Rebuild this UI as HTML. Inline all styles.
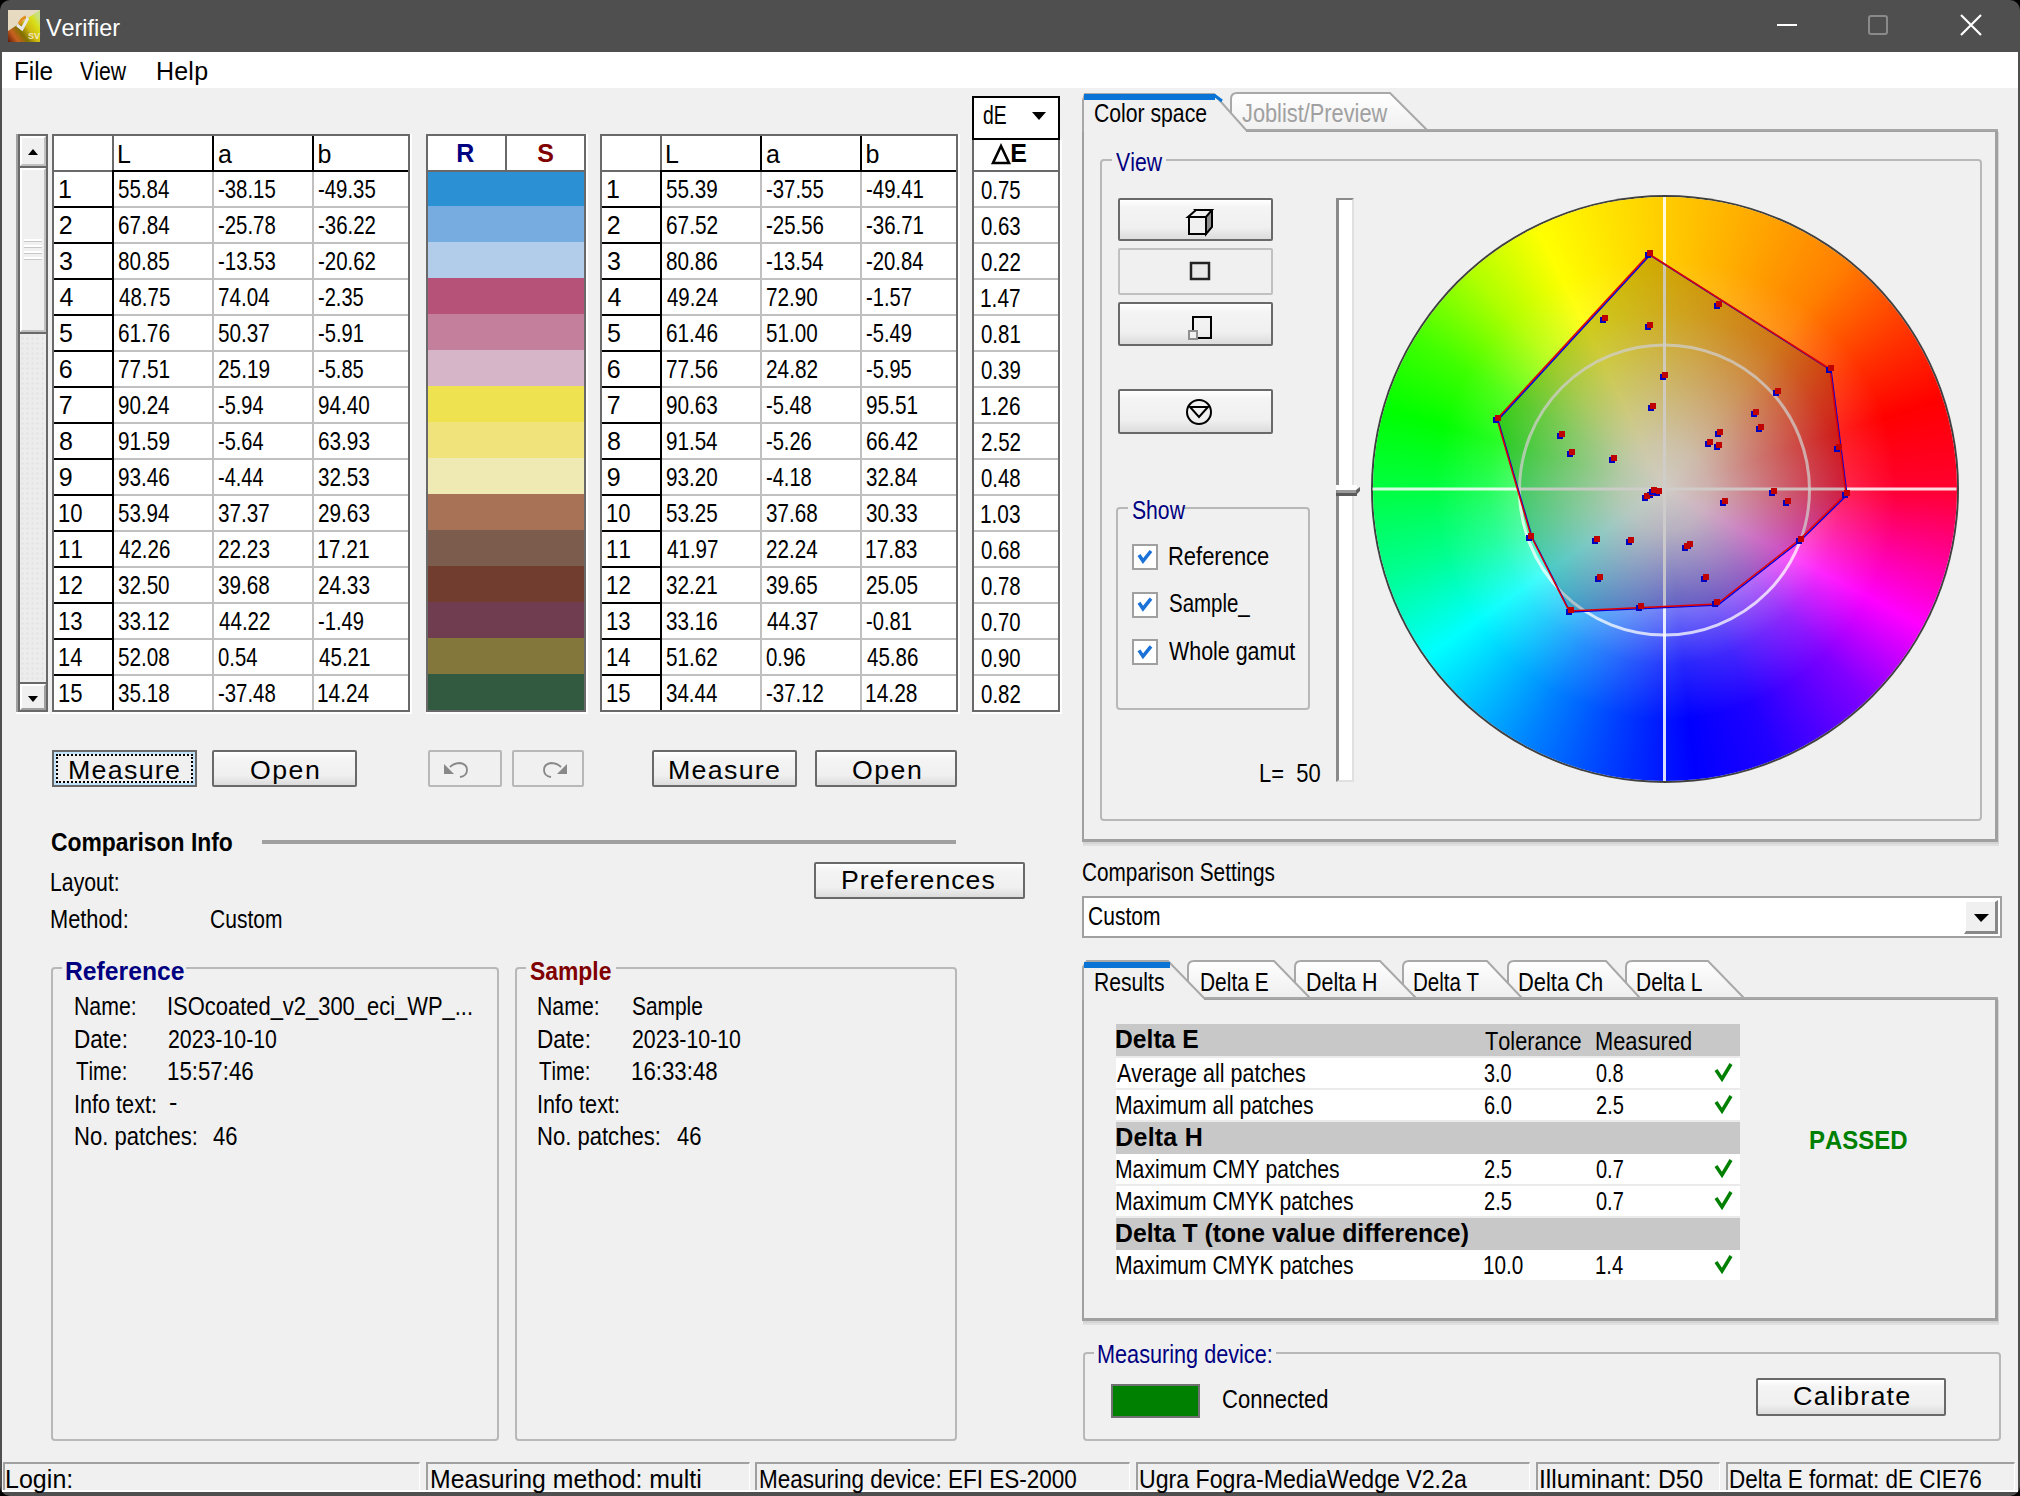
<!DOCTYPE html><html><head><meta charset="utf-8"><style>
html,body{margin:0;padding:0;}
body{width:2020px;height:1496px;position:relative;overflow:hidden;background:#f0f0f0;font-family:"Liberation Sans", sans-serif;font-kerning:none;}
.t{position:absolute;z-index:10;white-space:pre;line-height:1;font-family:"Liberation Sans", sans-serif;}
.r{position:absolute;box-sizing:border-box;}
svg{position:absolute;left:0;top:0;}
</style></head><body>
<div class="r" style="left:0px;top:0px;width:2020px;height:52px;background:#4f4f4f;"></div>
<div class="r" style="left:0px;top:52px;width:2px;height:1444px;background:#4f4f4f;"></div>
<div class="r" style="left:2018px;top:52px;width:2px;height:1444px;background:#4f4f4f;"></div>
<div class="r" style="left:0px;top:1492px;width:2020px;height:4px;background:#4f4f4f;"></div>
<div class="r" style="left:2px;top:52px;width:2016px;height:36px;background:#ffffff;"></div>
<svg width="2020" height="1496" style="z-index:50;pointer-events:none"><path d="M0 0 H10 A10 10 0 0 0 0 10 Z" fill="#000"/><path d="M2020 0 H2010 A10 10 0 0 1 2020 10 Z" fill="#000"/><path d="M0 1496 V1486 A10 10 0 0 0 10 1496 Z" fill="#000"/><path d="M2020 1496 V1486 A10 10 0 0 1 2010 1496 Z" fill="#000"/></svg>
<svg width="60" height="60" style="z-index:2"><defs><linearGradient id="ig" x1="0" y1="1" x2="1" y2="0.3"><stop offset="0" stop-color="#5a1808"/><stop offset="0.22" stop-color="#c86020"/><stop offset="0.42" stop-color="#807000"/><stop offset="0.62" stop-color="#d0b810"/><stop offset="0.85" stop-color="#d8e018"/><stop offset="1" stop-color="#c8e080"/></linearGradient></defs><rect x="8" y="10" width="32" height="32" fill="#e6dac0"/><path d="M8 31 L40 10 L40 42 L8 42 Z" fill="url(#ig)"/><path d="M19 24 Q22 18 26 17" stroke="#e09020" stroke-width="3" fill="none"/><path d="M17 25 L22 29 L28 18" stroke="#e8e8e8" stroke-width="3" fill="none"/><text x="28" y="39" font-family="Liberation Sans" font-weight="bold" font-size="9" fill="#f0e8c0">SV</text></svg>
<div class="t" style="left:46.40px;top:15.69px;font-size:24px;color:#ffffff;transform:scaleX(0.9733);transform-origin:0 0;">Verifier</div>
<div class="r" style="left:1777px;top:24px;width:20px;height:2px;background:#ffffff;"></div>
<div class="r" style="left:1868px;top:15px;width:20px;height:20px;border:2px solid #8a8a8a;border-radius:3px;"></div>
<svg width="2020" height="60" style="z-index:2"><path d="M1961 15 L1981 35 M1981 15 L1961 35" stroke="#fff" stroke-width="2.2"/></svg>
<div class="t" style="left:14.01px;top:59.03px;font-size:25px;color:#000;transform:scaleX(0.9698);transform-origin:0 0;">File</div>
<div class="t" style="left:79.91px;top:59.03px;font-size:25px;color:#000;transform:scaleX(0.8497);transform-origin:0 0;">View</div>
<div class="t" style="left:155.95px;top:59.03px;font-size:25px;color:#000;letter-spacing:0.228px;">Help</div>
<div class="r" style="left:16px;top:134px;width:32px;height:578px;background:#a0a0a0;"></div>
<div class="r" style="left:18px;top:134px;width:30px;height:578px;background:#696969;"></div>
<div class="r" style="left:20px;top:136px;width:26px;height:574px;background:#ececec;background-image:radial-gradient(#e4e4e4 35%,transparent 36%);background-size:5px 5px;"></div>
<div class="r" style="left:20px;top:136px;width:26px;height:30px;background:#f0f0f0;border-top:2px solid #fff;border-left:2px solid #fff;border-right:2px solid #c0c0c0;border-bottom:2px solid #c0c0c0;"></div>
<div class="r" style="left:20px;top:166px;width:26px;height:2px;background:#696969;"></div>
<svg width="100" height="720"><path d="M28 155 L33 149 L38 155 Z" fill="#000"/><path d="M28 695 L33 701 L38 695 Z" fill="#000"/></svg>
<div class="r" style="left:20px;top:168px;width:26px;height:164px;background:#f0f0f0;border-top:2px solid #fff;border-left:2px solid #fff;border-right:2px solid #c0c0c0;border-bottom:2px solid #c0c0c0;"></div>
<div class="r" style="left:20px;top:332px;width:26px;height:2px;background:#696969;"></div>
<div class="r" style="left:24px;top:239px;width:18px;height:2px;background:#ffffff;"></div>
<div class="r" style="left:24px;top:241px;width:18px;height:1px;background:#c8c8c8;"></div>
<div class="r" style="left:24px;top:245px;width:18px;height:2px;background:#ffffff;"></div>
<div class="r" style="left:24px;top:247px;width:18px;height:1px;background:#c8c8c8;"></div>
<div class="r" style="left:24px;top:251px;width:18px;height:2px;background:#ffffff;"></div>
<div class="r" style="left:24px;top:253px;width:18px;height:1px;background:#c8c8c8;"></div>
<div class="r" style="left:24px;top:257px;width:18px;height:2px;background:#ffffff;"></div>
<div class="r" style="left:24px;top:259px;width:18px;height:1px;background:#c8c8c8;"></div>
<div class="r" style="left:20px;top:682px;width:26px;height:2px;background:#696969;"></div>
<div class="r" style="left:20px;top:684px;width:26px;height:26px;background:#f0f0f0;border-top:2px solid #fff;border-left:2px solid #fff;border-right:2px solid #a0a0a0;border-bottom:2px solid #a0a0a0;"></div>
<svg width="100" height="720"><path d="M28 696 L38 696 L33 702 Z" fill="#000"/></svg>
<div class="r" style="left:16px;top:712px;width:34px;height:2px;background:#ffffff;"></div>
<div class="r" style="left:52px;top:134px;width:358px;height:578px;background:#696969;"></div>
<div class="r" style="left:54px;top:136px;width:354px;height:574px;background:#ffffff;"></div>
<div class="r" style="left:112px;top:136px;width:2px;height:34px;background:#696969;"></div>
<div class="r" style="left:112px;top:170px;width:2px;height:540px;background:#000;"></div>
<div class="r" style="left:54px;top:170px;width:58px;height:2px;background:#696969;"></div>
<div class="r" style="left:114px;top:170px;width:294px;height:2px;background:#000;"></div>
<div class="r" style="left:212px;top:136px;width:2px;height:34px;background:#000;"></div>
<div class="r" style="left:212px;top:172px;width:2px;height:538px;background:#c0c0c0;"></div>
<div class="r" style="left:312px;top:136px;width:2px;height:34px;background:#000;"></div>
<div class="r" style="left:312px;top:172px;width:2px;height:538px;background:#c0c0c0;"></div>
<div class="r" style="left:54px;top:206px;width:58px;height:2px;background:#000;"></div>
<div class="r" style="left:114px;top:206px;width:294px;height:2px;background:#c0c0c0;"></div>
<div class="r" style="left:54px;top:242px;width:58px;height:2px;background:#000;"></div>
<div class="r" style="left:114px;top:242px;width:294px;height:2px;background:#c0c0c0;"></div>
<div class="r" style="left:54px;top:278px;width:58px;height:2px;background:#000;"></div>
<div class="r" style="left:114px;top:278px;width:294px;height:2px;background:#c0c0c0;"></div>
<div class="r" style="left:54px;top:314px;width:58px;height:2px;background:#000;"></div>
<div class="r" style="left:114px;top:314px;width:294px;height:2px;background:#c0c0c0;"></div>
<div class="r" style="left:54px;top:350px;width:58px;height:2px;background:#000;"></div>
<div class="r" style="left:114px;top:350px;width:294px;height:2px;background:#c0c0c0;"></div>
<div class="r" style="left:54px;top:386px;width:58px;height:2px;background:#000;"></div>
<div class="r" style="left:114px;top:386px;width:294px;height:2px;background:#c0c0c0;"></div>
<div class="r" style="left:54px;top:422px;width:58px;height:2px;background:#000;"></div>
<div class="r" style="left:114px;top:422px;width:294px;height:2px;background:#c0c0c0;"></div>
<div class="r" style="left:54px;top:458px;width:58px;height:2px;background:#000;"></div>
<div class="r" style="left:114px;top:458px;width:294px;height:2px;background:#c0c0c0;"></div>
<div class="r" style="left:54px;top:494px;width:58px;height:2px;background:#000;"></div>
<div class="r" style="left:114px;top:494px;width:294px;height:2px;background:#c0c0c0;"></div>
<div class="r" style="left:54px;top:530px;width:58px;height:2px;background:#000;"></div>
<div class="r" style="left:114px;top:530px;width:294px;height:2px;background:#c0c0c0;"></div>
<div class="r" style="left:54px;top:566px;width:58px;height:2px;background:#000;"></div>
<div class="r" style="left:114px;top:566px;width:294px;height:2px;background:#c0c0c0;"></div>
<div class="r" style="left:54px;top:602px;width:58px;height:2px;background:#000;"></div>
<div class="r" style="left:114px;top:602px;width:294px;height:2px;background:#c0c0c0;"></div>
<div class="r" style="left:54px;top:638px;width:58px;height:2px;background:#000;"></div>
<div class="r" style="left:114px;top:638px;width:294px;height:2px;background:#c0c0c0;"></div>
<div class="r" style="left:54px;top:674px;width:58px;height:2px;background:#000;"></div>
<div class="r" style="left:114px;top:674px;width:294px;height:2px;background:#c0c0c0;"></div>
<div class="r" style="left:52px;top:712px;width:360px;height:2px;background:#ffffff;"></div>
<div class="r" style="left:410px;top:134px;width:2px;height:580px;background:#ffffff;"></div>
<div class="t" style="left:116.95px;top:142.03px;font-size:25px;color:#000;">L</div>
<div class="t" style="left:217.94px;top:142.03px;font-size:25px;color:#000;">a</div>
<div class="t" style="left:317.39px;top:142.03px;font-size:25px;color:#000;">b</div>
<div class="t" style="left:58.10px;top:177.03px;font-size:25px;color:#000;">1</div>
<div class="t" style="left:118.18px;top:177.03px;font-size:25px;color:#000;transform:scaleX(0.8220);transform-origin:0 0;">55.84</div>
<div class="t" style="left:218.09px;top:177.03px;font-size:25px;color:#000;transform:scaleX(0.8148);transform-origin:0 0;">-38.15</div>
<div class="t" style="left:318.09px;top:177.03px;font-size:25px;color:#000;transform:scaleX(0.8148);transform-origin:0 0;">-49.35</div>
<div class="t" style="left:58.74px;top:213.03px;font-size:25px;color:#000;">2</div>
<div class="t" style="left:117.95px;top:213.03px;font-size:25px;color:#000;transform:scaleX(0.8256);transform-origin:0 0;">67.84</div>
<div class="t" style="left:218.09px;top:213.03px;font-size:25px;color:#000;transform:scaleX(0.8153);transform-origin:0 0;">-25.78</div>
<div class="t" style="left:318.09px;top:213.03px;font-size:25px;color:#000;transform:scaleX(0.8173);transform-origin:0 0;">-36.22</div>
<div class="t" style="left:59.05px;top:249.03px;font-size:25px;color:#000;">3</div>
<div class="t" style="left:118.10px;top:249.03px;font-size:25px;color:#000;transform:scaleX(0.8275);transform-origin:0 0;">80.85</div>
<div class="t" style="left:218.09px;top:249.03px;font-size:25px;color:#000;transform:scaleX(0.8154);transform-origin:0 0;">-13.53</div>
<div class="t" style="left:318.09px;top:249.03px;font-size:25px;color:#000;transform:scaleX(0.8173);transform-origin:0 0;">-20.62</div>
<div class="t" style="left:59.43px;top:285.03px;font-size:25px;color:#000;">4</div>
<div class="t" style="left:118.53px;top:285.03px;font-size:25px;color:#000;transform:scaleX(0.8205);transform-origin:0 0;">48.75</div>
<div class="t" style="left:217.94px;top:285.03px;font-size:25px;color:#000;transform:scaleX(0.8258);transform-origin:0 0;">74.04</div>
<div class="t" style="left:318.11px;top:285.03px;font-size:25px;color:#000;transform:scaleX(0.8026);transform-origin:0 0;">-2.35</div>
<div class="t" style="left:59.00px;top:321.03px;font-size:25px;color:#000;">5</div>
<div class="t" style="left:117.95px;top:321.03px;font-size:25px;color:#000;transform:scaleX(0.8307);transform-origin:0 0;">61.76</div>
<div class="t" style="left:218.17px;top:321.03px;font-size:25px;color:#000;transform:scaleX(0.8291);transform-origin:0 0;">50.37</div>
<div class="t" style="left:318.11px;top:321.03px;font-size:25px;color:#000;transform:scaleX(0.8051);transform-origin:0 0;">-5.91</div>
<div class="t" style="left:58.73px;top:357.03px;font-size:25px;color:#000;">6</div>
<div class="t" style="left:117.93px;top:357.03px;font-size:25px;color:#000;transform:scaleX(0.8325);transform-origin:0 0;">77.51</div>
<div class="t" style="left:217.95px;top:357.03px;font-size:25px;color:#000;transform:scaleX(0.8317);transform-origin:0 0;">25.19</div>
<div class="t" style="left:318.11px;top:357.03px;font-size:25px;color:#000;transform:scaleX(0.8026);transform-origin:0 0;">-5.85</div>
<div class="t" style="left:58.72px;top:393.03px;font-size:25px;color:#000;">7</div>
<div class="t" style="left:118.03px;top:393.03px;font-size:25px;color:#000;transform:scaleX(0.8243);transform-origin:0 0;">90.24</div>
<div class="t" style="left:218.11px;top:393.03px;font-size:25px;color:#000;transform:scaleX(0.7980);transform-origin:0 0;">-5.94</div>
<div class="t" style="left:318.03px;top:393.03px;font-size:25px;color:#000;transform:scaleX(0.8276);transform-origin:0 0;">94.40</div>
<div class="t" style="left:58.91px;top:429.03px;font-size:25px;color:#000;">8</div>
<div class="t" style="left:118.03px;top:429.03px;font-size:25px;color:#000;transform:scaleX(0.8305);transform-origin:0 0;">91.59</div>
<div class="t" style="left:218.11px;top:429.03px;font-size:25px;color:#000;transform:scaleX(0.7980);transform-origin:0 0;">-5.64</div>
<div class="t" style="left:317.95px;top:429.03px;font-size:25px;color:#000;transform:scaleX(0.8307);transform-origin:0 0;">63.93</div>
<div class="t" style="left:58.83px;top:465.03px;font-size:25px;color:#000;">9</div>
<div class="t" style="left:118.03px;top:465.03px;font-size:25px;color:#000;transform:scaleX(0.8293);transform-origin:0 0;">93.46</div>
<div class="t" style="left:218.11px;top:465.03px;font-size:25px;color:#000;transform:scaleX(0.7980);transform-origin:0 0;">-4.44</div>
<div class="t" style="left:318.21px;top:465.03px;font-size:25px;color:#000;transform:scaleX(0.8263);transform-origin:0 0;">32.53</div>
<div class="t" style="left:58.32px;top:501.03px;font-size:25px;color:#000;transform:scaleX(0.8826);transform-origin:0 0;">10</div>
<div class="t" style="left:118.18px;top:501.03px;font-size:25px;color:#000;transform:scaleX(0.8220);transform-origin:0 0;">53.94</div>
<div class="t" style="left:218.21px;top:501.03px;font-size:25px;color:#000;transform:scaleX(0.8285);transform-origin:0 0;">37.37</div>
<div class="t" style="left:317.96px;top:501.03px;font-size:25px;color:#000;transform:scaleX(0.8305);transform-origin:0 0;">29.63</div>
<div class="t" style="left:58.30px;top:537.03px;font-size:25px;color:#000;transform:scaleX(0.8913);transform-origin:0 0;">11</div>
<div class="t" style="left:118.53px;top:537.03px;font-size:25px;color:#000;transform:scaleX(0.8212);transform-origin:0 0;">42.26</div>
<div class="t" style="left:217.96px;top:537.03px;font-size:25px;color:#000;transform:scaleX(0.8305);transform-origin:0 0;">22.23</div>
<div class="t" style="left:317.40px;top:537.03px;font-size:25px;color:#000;transform:scaleX(0.8412);transform-origin:0 0;">17.21</div>
<div class="t" style="left:58.30px;top:573.03px;font-size:25px;color:#000;transform:scaleX(0.8926);transform-origin:0 0;">12</div>
<div class="t" style="left:118.21px;top:573.03px;font-size:25px;color:#000;transform:scaleX(0.8246);transform-origin:0 0;">32.50</div>
<div class="t" style="left:218.21px;top:573.03px;font-size:25px;color:#000;transform:scaleX(0.8261);transform-origin:0 0;">39.68</div>
<div class="t" style="left:317.96px;top:573.03px;font-size:25px;color:#000;transform:scaleX(0.8305);transform-origin:0 0;">24.33</div>
<div class="t" style="left:58.31px;top:609.03px;font-size:25px;color:#000;transform:scaleX(0.8869);transform-origin:0 0;">13</div>
<div class="t" style="left:118.21px;top:609.03px;font-size:25px;color:#000;transform:scaleX(0.8285);transform-origin:0 0;">33.12</div>
<div class="t" style="left:218.53px;top:609.03px;font-size:25px;color:#000;transform:scaleX(0.8233);transform-origin:0 0;">44.22</div>
<div class="t" style="left:318.11px;top:609.03px;font-size:25px;color:#000;transform:scaleX(0.8046);transform-origin:0 0;">-1.49</div>
<div class="t" style="left:58.34px;top:645.03px;font-size:25px;color:#000;transform:scaleX(0.8740);transform-origin:0 0;">14</div>
<div class="t" style="left:118.17px;top:645.03px;font-size:25px;color:#000;transform:scaleX(0.8268);transform-origin:0 0;">52.08</div>
<div class="t" style="left:218.21px;top:645.03px;font-size:25px;color:#000;transform:scaleX(0.8094);transform-origin:0 0;">0.54</div>
<div class="t" style="left:318.53px;top:645.03px;font-size:25px;color:#000;transform:scaleX(0.8228);transform-origin:0 0;">45.21</div>
<div class="t" style="left:58.31px;top:681.03px;font-size:25px;color:#000;transform:scaleX(0.8852);transform-origin:0 0;">15</div>
<div class="t" style="left:118.21px;top:681.03px;font-size:25px;color:#000;transform:scaleX(0.8261);transform-origin:0 0;">35.18</div>
<div class="t" style="left:218.09px;top:681.03px;font-size:25px;color:#000;transform:scaleX(0.8153);transform-origin:0 0;">-37.48</div>
<div class="t" style="left:317.41px;top:681.03px;font-size:25px;color:#000;transform:scaleX(0.8344);transform-origin:0 0;">14.24</div>
<div class="r" style="left:600px;top:134px;width:358px;height:578px;background:#696969;"></div>
<div class="r" style="left:602px;top:136px;width:354px;height:574px;background:#ffffff;"></div>
<div class="r" style="left:660px;top:136px;width:2px;height:34px;background:#696969;"></div>
<div class="r" style="left:660px;top:170px;width:2px;height:540px;background:#000;"></div>
<div class="r" style="left:602px;top:170px;width:58px;height:2px;background:#696969;"></div>
<div class="r" style="left:662px;top:170px;width:294px;height:2px;background:#000;"></div>
<div class="r" style="left:760px;top:136px;width:2px;height:34px;background:#000;"></div>
<div class="r" style="left:760px;top:172px;width:2px;height:538px;background:#c0c0c0;"></div>
<div class="r" style="left:860px;top:136px;width:2px;height:34px;background:#000;"></div>
<div class="r" style="left:860px;top:172px;width:2px;height:538px;background:#c0c0c0;"></div>
<div class="r" style="left:602px;top:206px;width:58px;height:2px;background:#000;"></div>
<div class="r" style="left:662px;top:206px;width:294px;height:2px;background:#c0c0c0;"></div>
<div class="r" style="left:602px;top:242px;width:58px;height:2px;background:#000;"></div>
<div class="r" style="left:662px;top:242px;width:294px;height:2px;background:#c0c0c0;"></div>
<div class="r" style="left:602px;top:278px;width:58px;height:2px;background:#000;"></div>
<div class="r" style="left:662px;top:278px;width:294px;height:2px;background:#c0c0c0;"></div>
<div class="r" style="left:602px;top:314px;width:58px;height:2px;background:#000;"></div>
<div class="r" style="left:662px;top:314px;width:294px;height:2px;background:#c0c0c0;"></div>
<div class="r" style="left:602px;top:350px;width:58px;height:2px;background:#000;"></div>
<div class="r" style="left:662px;top:350px;width:294px;height:2px;background:#c0c0c0;"></div>
<div class="r" style="left:602px;top:386px;width:58px;height:2px;background:#000;"></div>
<div class="r" style="left:662px;top:386px;width:294px;height:2px;background:#c0c0c0;"></div>
<div class="r" style="left:602px;top:422px;width:58px;height:2px;background:#000;"></div>
<div class="r" style="left:662px;top:422px;width:294px;height:2px;background:#c0c0c0;"></div>
<div class="r" style="left:602px;top:458px;width:58px;height:2px;background:#000;"></div>
<div class="r" style="left:662px;top:458px;width:294px;height:2px;background:#c0c0c0;"></div>
<div class="r" style="left:602px;top:494px;width:58px;height:2px;background:#000;"></div>
<div class="r" style="left:662px;top:494px;width:294px;height:2px;background:#c0c0c0;"></div>
<div class="r" style="left:602px;top:530px;width:58px;height:2px;background:#000;"></div>
<div class="r" style="left:662px;top:530px;width:294px;height:2px;background:#c0c0c0;"></div>
<div class="r" style="left:602px;top:566px;width:58px;height:2px;background:#000;"></div>
<div class="r" style="left:662px;top:566px;width:294px;height:2px;background:#c0c0c0;"></div>
<div class="r" style="left:602px;top:602px;width:58px;height:2px;background:#000;"></div>
<div class="r" style="left:662px;top:602px;width:294px;height:2px;background:#c0c0c0;"></div>
<div class="r" style="left:602px;top:638px;width:58px;height:2px;background:#000;"></div>
<div class="r" style="left:662px;top:638px;width:294px;height:2px;background:#c0c0c0;"></div>
<div class="r" style="left:602px;top:674px;width:58px;height:2px;background:#000;"></div>
<div class="r" style="left:662px;top:674px;width:294px;height:2px;background:#c0c0c0;"></div>
<div class="r" style="left:600px;top:712px;width:360px;height:2px;background:#ffffff;"></div>
<div class="r" style="left:958px;top:134px;width:2px;height:580px;background:#ffffff;"></div>
<div class="t" style="left:664.95px;top:142.03px;font-size:25px;color:#000;">L</div>
<div class="t" style="left:765.94px;top:142.03px;font-size:25px;color:#000;">a</div>
<div class="t" style="left:865.39px;top:142.03px;font-size:25px;color:#000;">b</div>
<div class="t" style="left:606.10px;top:177.03px;font-size:25px;color:#000;">1</div>
<div class="t" style="left:666.17px;top:177.03px;font-size:25px;color:#000;transform:scaleX(0.8281);transform-origin:0 0;">55.39</div>
<div class="t" style="left:766.09px;top:177.03px;font-size:25px;color:#000;transform:scaleX(0.8148);transform-origin:0 0;">-37.55</div>
<div class="t" style="left:866.09px;top:177.03px;font-size:25px;color:#000;transform:scaleX(0.8169);transform-origin:0 0;">-49.41</div>
<div class="t" style="left:606.74px;top:213.03px;font-size:25px;color:#000;">2</div>
<div class="t" style="left:665.94px;top:213.03px;font-size:25px;color:#000;transform:scaleX(0.8329);transform-origin:0 0;">67.52</div>
<div class="t" style="left:766.09px;top:213.03px;font-size:25px;color:#000;transform:scaleX(0.8154);transform-origin:0 0;">-25.56</div>
<div class="t" style="left:866.09px;top:213.03px;font-size:25px;color:#000;transform:scaleX(0.8169);transform-origin:0 0;">-36.71</div>
<div class="t" style="left:607.05px;top:249.03px;font-size:25px;color:#000;">3</div>
<div class="t" style="left:666.10px;top:249.03px;font-size:25px;color:#000;transform:scaleX(0.8281);transform-origin:0 0;">80.86</div>
<div class="t" style="left:766.10px;top:249.03px;font-size:25px;color:#000;transform:scaleX(0.8111);transform-origin:0 0;">-13.54</div>
<div class="t" style="left:866.10px;top:249.03px;font-size:25px;color:#000;transform:scaleX(0.8111);transform-origin:0 0;">-20.84</div>
<div class="t" style="left:607.43px;top:285.03px;font-size:25px;color:#000;">4</div>
<div class="t" style="left:666.53px;top:285.03px;font-size:25px;color:#000;transform:scaleX(0.8163);transform-origin:0 0;">49.24</div>
<div class="t" style="left:765.94px;top:285.03px;font-size:25px;color:#000;transform:scaleX(0.8291);transform-origin:0 0;">72.90</div>
<div class="t" style="left:866.11px;top:285.03px;font-size:25px;color:#000;transform:scaleX(0.8057);transform-origin:0 0;">-1.57</div>
<div class="t" style="left:607.00px;top:321.03px;font-size:25px;color:#000;">5</div>
<div class="t" style="left:665.95px;top:321.03px;font-size:25px;color:#000;transform:scaleX(0.8307);transform-origin:0 0;">61.46</div>
<div class="t" style="left:766.17px;top:321.03px;font-size:25px;color:#000;transform:scaleX(0.8253);transform-origin:0 0;">51.00</div>
<div class="t" style="left:866.11px;top:321.03px;font-size:25px;color:#000;transform:scaleX(0.8046);transform-origin:0 0;">-5.49</div>
<div class="t" style="left:606.73px;top:357.03px;font-size:25px;color:#000;">6</div>
<div class="t" style="left:665.94px;top:357.03px;font-size:25px;color:#000;transform:scaleX(0.8308);transform-origin:0 0;">77.56</div>
<div class="t" style="left:765.95px;top:357.03px;font-size:25px;color:#000;transform:scaleX(0.8327);transform-origin:0 0;">24.82</div>
<div class="t" style="left:866.11px;top:357.03px;font-size:25px;color:#000;transform:scaleX(0.8026);transform-origin:0 0;">-5.95</div>
<div class="t" style="left:606.72px;top:393.03px;font-size:25px;color:#000;">7</div>
<div class="t" style="left:666.03px;top:393.03px;font-size:25px;color:#000;transform:scaleX(0.8293);transform-origin:0 0;">90.63</div>
<div class="t" style="left:766.11px;top:393.03px;font-size:25px;color:#000;transform:scaleX(0.8031);transform-origin:0 0;">-5.48</div>
<div class="t" style="left:866.03px;top:393.03px;font-size:25px;color:#000;transform:scaleX(0.8310);transform-origin:0 0;">95.51</div>
<div class="t" style="left:606.91px;top:429.03px;font-size:25px;color:#000;">8</div>
<div class="t" style="left:666.03px;top:429.03px;font-size:25px;color:#000;transform:scaleX(0.8243);transform-origin:0 0;">91.54</div>
<div class="t" style="left:766.11px;top:429.03px;font-size:25px;color:#000;transform:scaleX(0.8033);transform-origin:0 0;">-5.26</div>
<div class="t" style="left:865.94px;top:429.03px;font-size:25px;color:#000;transform:scaleX(0.8329);transform-origin:0 0;">66.42</div>
<div class="t" style="left:606.83px;top:465.03px;font-size:25px;color:#000;">9</div>
<div class="t" style="left:666.03px;top:465.03px;font-size:25px;color:#000;transform:scaleX(0.8276);transform-origin:0 0;">93.20</div>
<div class="t" style="left:766.11px;top:465.03px;font-size:25px;color:#000;transform:scaleX(0.8031);transform-origin:0 0;">-4.18</div>
<div class="t" style="left:866.22px;top:465.03px;font-size:25px;color:#000;transform:scaleX(0.8213);transform-origin:0 0;">32.84</div>
<div class="t" style="left:606.32px;top:501.03px;font-size:25px;color:#000;transform:scaleX(0.8826);transform-origin:0 0;">10</div>
<div class="t" style="left:666.17px;top:501.03px;font-size:25px;color:#000;transform:scaleX(0.8263);transform-origin:0 0;">53.25</div>
<div class="t" style="left:766.21px;top:501.03px;font-size:25px;color:#000;transform:scaleX(0.8261);transform-origin:0 0;">37.68</div>
<div class="t" style="left:866.21px;top:501.03px;font-size:25px;color:#000;transform:scaleX(0.8263);transform-origin:0 0;">30.33</div>
<div class="t" style="left:606.30px;top:537.03px;font-size:25px;color:#000;transform:scaleX(0.8913);transform-origin:0 0;">11</div>
<div class="t" style="left:666.53px;top:537.03px;font-size:25px;color:#000;transform:scaleX(0.8233);transform-origin:0 0;">41.97</div>
<div class="t" style="left:765.96px;top:537.03px;font-size:25px;color:#000;transform:scaleX(0.8255);transform-origin:0 0;">22.24</div>
<div class="t" style="left:865.40px;top:537.03px;font-size:25px;color:#000;transform:scaleX(0.8395);transform-origin:0 0;">17.83</div>
<div class="t" style="left:606.30px;top:573.03px;font-size:25px;color:#000;transform:scaleX(0.8926);transform-origin:0 0;">12</div>
<div class="t" style="left:666.21px;top:573.03px;font-size:25px;color:#000;transform:scaleX(0.8280);transform-origin:0 0;">32.21</div>
<div class="t" style="left:766.21px;top:573.03px;font-size:25px;color:#000;transform:scaleX(0.8256);transform-origin:0 0;">39.65</div>
<div class="t" style="left:865.96px;top:573.03px;font-size:25px;color:#000;transform:scaleX(0.8298);transform-origin:0 0;">25.05</div>
<div class="t" style="left:606.31px;top:609.03px;font-size:25px;color:#000;transform:scaleX(0.8869);transform-origin:0 0;">13</div>
<div class="t" style="left:666.21px;top:609.03px;font-size:25px;color:#000;transform:scaleX(0.8263);transform-origin:0 0;">33.16</div>
<div class="t" style="left:766.53px;top:609.03px;font-size:25px;color:#000;transform:scaleX(0.8233);transform-origin:0 0;">44.37</div>
<div class="t" style="left:866.11px;top:609.03px;font-size:25px;color:#000;transform:scaleX(0.8051);transform-origin:0 0;">-0.81</div>
<div class="t" style="left:606.34px;top:645.03px;font-size:25px;color:#000;transform:scaleX(0.8740);transform-origin:0 0;">14</div>
<div class="t" style="left:666.17px;top:645.03px;font-size:25px;color:#000;transform:scaleX(0.8291);transform-origin:0 0;">51.62</div>
<div class="t" style="left:766.20px;top:645.03px;font-size:25px;color:#000;transform:scaleX(0.8158);transform-origin:0 0;">0.96</div>
<div class="t" style="left:866.53px;top:645.03px;font-size:25px;color:#000;transform:scaleX(0.8212);transform-origin:0 0;">45.86</div>
<div class="t" style="left:606.31px;top:681.03px;font-size:25px;color:#000;transform:scaleX(0.8852);transform-origin:0 0;">15</div>
<div class="t" style="left:666.22px;top:681.03px;font-size:25px;color:#000;transform:scaleX(0.8213);transform-origin:0 0;">34.44</div>
<div class="t" style="left:766.09px;top:681.03px;font-size:25px;color:#000;transform:scaleX(0.8173);transform-origin:0 0;">-37.12</div>
<div class="t" style="left:865.40px;top:681.03px;font-size:25px;color:#000;transform:scaleX(0.8393);transform-origin:0 0;">14.28</div>
<div class="r" style="left:426px;top:134px;width:160px;height:578px;background:#696969;"></div>
<div class="r" style="left:428px;top:136px;width:156px;height:34px;background:#ffffff;"></div>
<div class="r" style="left:505px;top:136px;width:2px;height:34px;background:#696969;"></div>
<div class="r" style="left:428px;top:170px;width:156px;height:2px;background:#696969;"></div>
<div class="r" style="left:428px;top:172px;width:156px;height:34px;background:#2b90d4;"></div>
<div class="r" style="left:428px;top:206px;width:156px;height:36px;background:#76acdf;"></div>
<div class="r" style="left:428px;top:242px;width:156px;height:36px;background:#b1cde9;"></div>
<div class="r" style="left:428px;top:278px;width:156px;height:36px;background:#b65278;"></div>
<div class="r" style="left:428px;top:314px;width:156px;height:36px;background:#c47f9c;"></div>
<div class="r" style="left:428px;top:350px;width:156px;height:36px;background:#d7b5c9;"></div>
<div class="r" style="left:428px;top:386px;width:156px;height:36px;background:#eee250;"></div>
<div class="r" style="left:428px;top:422px;width:156px;height:36px;background:#f0e37c;"></div>
<div class="r" style="left:428px;top:458px;width:156px;height:36px;background:#efeab3;"></div>
<div class="r" style="left:428px;top:494px;width:156px;height:36px;background:#a87256;"></div>
<div class="r" style="left:428px;top:530px;width:156px;height:36px;background:#7c5c4d;"></div>
<div class="r" style="left:428px;top:566px;width:156px;height:36px;background:#703d2e;"></div>
<div class="r" style="left:428px;top:602px;width:156px;height:36px;background:#703c50;"></div>
<div class="r" style="left:428px;top:638px;width:156px;height:36px;background:#84773c;"></div>
<div class="r" style="left:428px;top:674px;width:156px;height:36px;background:#315a40;"></div>
<div class="r" style="left:426px;top:712px;width:162px;height:2px;background:#ffffff;"></div>
<div class="r" style="left:586px;top:134px;width:2px;height:580px;background:#ffffff;"></div>
<div class="t" style="left:456.33px;top:141.03px;font-size:25px;color:#000080;font-weight:bold;">R</div>
<div class="t" style="left:537.28px;top:141.03px;font-size:25px;color:#800000;font-weight:bold;">S</div>
<div class="r" style="left:972px;top:140px;width:88px;height:572px;background:#696969;"></div>
<div class="r" style="left:974px;top:140px;width:84px;height:570px;background:#ffffff;"></div>
<div class="r" style="left:974px;top:170px;width:84px;height:2px;background:#696969;"></div>
<div class="r" style="left:974px;top:206px;width:84px;height:2px;background:#c0c0c0;"></div>
<div class="r" style="left:974px;top:242px;width:84px;height:2px;background:#c0c0c0;"></div>
<div class="r" style="left:974px;top:278px;width:84px;height:2px;background:#c0c0c0;"></div>
<div class="r" style="left:974px;top:314px;width:84px;height:2px;background:#c0c0c0;"></div>
<div class="r" style="left:974px;top:350px;width:84px;height:2px;background:#c0c0c0;"></div>
<div class="r" style="left:974px;top:386px;width:84px;height:2px;background:#c0c0c0;"></div>
<div class="r" style="left:974px;top:422px;width:84px;height:2px;background:#c0c0c0;"></div>
<div class="r" style="left:974px;top:458px;width:84px;height:2px;background:#c0c0c0;"></div>
<div class="r" style="left:974px;top:494px;width:84px;height:2px;background:#c0c0c0;"></div>
<div class="r" style="left:974px;top:530px;width:84px;height:2px;background:#c0c0c0;"></div>
<div class="r" style="left:974px;top:566px;width:84px;height:2px;background:#c0c0c0;"></div>
<div class="r" style="left:974px;top:602px;width:84px;height:2px;background:#c0c0c0;"></div>
<div class="r" style="left:974px;top:638px;width:84px;height:2px;background:#c0c0c0;"></div>
<div class="r" style="left:974px;top:674px;width:84px;height:2px;background:#c0c0c0;"></div>
<div class="r" style="left:972px;top:96px;width:88px;height:44px;background:#000;"></div>
<div class="r" style="left:974px;top:98px;width:84px;height:40px;background:#ffffff;"></div>
<div class="t" style="left:983.19px;top:103.03px;font-size:25px;color:#000;transform:scaleX(0.7732);transform-origin:0 0;">dE</div>
<svg width="1100" height="200"><path d="M1032 112 L1046 112 L1039 120 Z" fill="#000"/></svg>
<svg width="1100" height="200"><path d="M1001 146 L993 163 L1009 163 Z" fill="none" stroke="#000" stroke-width="2.6"/></svg>
<div class="t" style="left:1010.33px;top:141.03px;font-size:25px;color:#000;font-weight:bold;">E</div>
<div class="r" style="left:972px;top:712px;width:90px;height:2px;background:#ffffff;"></div>
<div class="r" style="left:1060px;top:140px;width:2px;height:574px;background:#ffffff;"></div>
<div class="t" style="left:981.20px;top:178.03px;font-size:25px;color:#000;transform:scaleX(0.8149);transform-origin:0 0;">0.75</div>
<div class="t" style="left:981.20px;top:214.03px;font-size:25px;color:#000;transform:scaleX(0.8158);transform-origin:0 0;">0.63</div>
<div class="t" style="left:981.20px;top:250.03px;font-size:25px;color:#000;transform:scaleX(0.8186);transform-origin:0 0;">0.22</div>
<div class="t" style="left:980.41px;top:286.03px;font-size:25px;color:#000;transform:scaleX(0.8352);transform-origin:0 0;">1.47</div>
<div class="t" style="left:981.20px;top:322.03px;font-size:25px;color:#000;transform:scaleX(0.8179);transform-origin:0 0;">0.81</div>
<div class="t" style="left:981.20px;top:358.03px;font-size:25px;color:#000;transform:scaleX(0.8173);transform-origin:0 0;">0.39</div>
<div class="t" style="left:980.41px;top:394.03px;font-size:25px;color:#000;transform:scaleX(0.8323);transform-origin:0 0;">1.26</div>
<div class="t" style="left:980.96px;top:430.03px;font-size:25px;color:#000;transform:scaleX(0.8235);transform-origin:0 0;">2.52</div>
<div class="t" style="left:981.20px;top:466.03px;font-size:25px;color:#000;transform:scaleX(0.8156);transform-origin:0 0;">0.48</div>
<div class="t" style="left:980.41px;top:502.03px;font-size:25px;color:#000;transform:scaleX(0.8323);transform-origin:0 0;">1.03</div>
<div class="t" style="left:981.20px;top:538.03px;font-size:25px;color:#000;transform:scaleX(0.8156);transform-origin:0 0;">0.68</div>
<div class="t" style="left:981.20px;top:574.03px;font-size:25px;color:#000;transform:scaleX(0.8156);transform-origin:0 0;">0.78</div>
<div class="t" style="left:981.21px;top:610.03px;font-size:25px;color:#000;transform:scaleX(0.8136);transform-origin:0 0;">0.70</div>
<div class="t" style="left:981.21px;top:646.03px;font-size:25px;color:#000;transform:scaleX(0.8136);transform-origin:0 0;">0.90</div>
<div class="t" style="left:981.20px;top:682.03px;font-size:25px;color:#000;transform:scaleX(0.8186);transform-origin:0 0;">0.82</div>
<div class="r" style="left:52px;top:750px;width:145px;height:37px;background:#f0f0f0;border:2px solid #696969;box-shadow:inset 0 0 0 2px #c0e2fb;"></div>
<div class="r" style="left:56px;top:754px;width:137px;height:29px;border:2px dotted #000;"></div>
<div class="t" style="left:67.80px;top:758.03px;font-size:25px;color:#000;letter-spacing:1.198px;transform:scaleX(1.0713);transform-origin:0 0;">Measure</div>
<div class="r" style="left:212px;top:750px;width:145px;height:37px;background:linear-gradient(#ffffff 0%,#f4f4f4 20%,#f0f0f0 70%,#dcdcdc 100%);border:2px solid #696969;border-radius:2px;"></div>
<div class="t" style="left:249.74px;top:758.03px;font-size:25px;color:#000;letter-spacing:1.403px;transform:scaleX(1.0676);transform-origin:0 0;">Open</div>
<div class="r" style="left:428px;top:750px;width:74px;height:37px;background:#f0f0f0;border:2px solid #b8b8b8;border-radius:2px;"></div>
<div class="r" style="left:512px;top:750px;width:72px;height:37px;background:#f0f0f0;border:2px solid #b8b8b8;border-radius:2px;"></div>
<svg width="700" height="800" style="z-index:2"><path d="M444 764 L444 774 L454 774 Z" fill="#888"/><path d="M450 767 Q454 763 460 763 Q467 764 467 770 Q467 776 460 777" fill="none" stroke="#888" stroke-width="1.8"/><path d="M567 764 L567 774 L557 774 Z" fill="#888"/><path d="M561 767 Q557 763 551 763 Q544 764 544 770 Q544 776 551 777" fill="none" stroke="#888" stroke-width="1.8"/></svg>
<div class="r" style="left:652px;top:750px;width:145px;height:37px;background:linear-gradient(#ffffff 0%,#f4f4f4 20%,#f0f0f0 70%,#dcdcdc 100%);border:2px solid #696969;border-radius:2px;"></div>
<div class="t" style="left:667.80px;top:758.03px;font-size:25px;color:#000;letter-spacing:1.198px;transform:scaleX(1.0713);transform-origin:0 0;">Measure</div>
<div class="r" style="left:815px;top:750px;width:142px;height:37px;background:linear-gradient(#ffffff 0%,#f4f4f4 20%,#f0f0f0 70%,#dcdcdc 100%);border:2px solid #696969;border-radius:2px;"></div>
<div class="t" style="left:851.74px;top:758.03px;font-size:25px;color:#000;letter-spacing:1.403px;transform:scaleX(1.0676);transform-origin:0 0;">Open</div>
<div class="t" style="left:51.06px;top:830.03px;font-size:25px;color:#000;font-weight:bold;transform:scaleX(0.9155);transform-origin:0 0;">Comparison Info</div>
<div class="r" style="left:262px;top:840px;width:694px;height:4px;background:#a0a0a0;"></div>
<div class="t" style="left:50.26px;top:869.53px;font-size:25px;color:#000;transform:scaleX(0.8497);transform-origin:0 0;">Layout:</div>
<div class="t" style="left:50.21px;top:907.03px;font-size:25px;color:#000;transform:scaleX(0.8721);transform-origin:0 0;">Method:</div>
<div class="t" style="left:209.93px;top:907.03px;font-size:25px;color:#000;transform:scaleX(0.8412);transform-origin:0 0;">Custom</div>
<div class="r" style="left:814px;top:862px;width:211px;height:37px;background:linear-gradient(#ffffff 0%,#f4f4f4 20%,#f0f0f0 70%,#dcdcdc 100%);border:2px solid #696969;border-radius:2px;"></div>
<div class="t" style="left:840.81px;top:868.03px;font-size:25px;color:#000;letter-spacing:0.938px;transform:scaleX(1.0667);transform-origin:0 0;">Preferences</div>
<div class="r" style="left:51px;top:967px;width:448px;height:474px;border:2px solid #b8b8b8;border-radius:4px;"></div>
<div class="r" style="left:515px;top:967px;width:442px;height:474px;border:2px solid #b8b8b8;border-radius:4px;"></div>
<div class="r" style="left:62px;top:958px;width:124px;height:22px;background:#f0f0f0;"></div>
<div class="t" style="left:65.35px;top:959.03px;font-size:25px;color:#000080;font-weight:bold;transform:scaleX(0.9884);transform-origin:0 0;">Reference</div>
<div class="r" style="left:526px;top:958px;width:90px;height:22px;background:#f0f0f0;"></div>
<div class="t" style="left:530.34px;top:959.03px;font-size:25px;color:#800000;font-weight:bold;transform:scaleX(0.9158);transform-origin:0 0;">Sample</div>
<div class="t" style="left:74.25px;top:994.03px;font-size:25px;color:#000;transform:scaleX(0.8514);transform-origin:0 0;">Name:</div>
<div class="t" style="left:537.25px;top:994.03px;font-size:25px;color:#000;transform:scaleX(0.8514);transform-origin:0 0;">Name:</div>
<div class="t" style="left:74.15px;top:1026.53px;font-size:25px;color:#000;transform:scaleX(0.9022);transform-origin:0 0;">Date:</div>
<div class="t" style="left:537.15px;top:1026.53px;font-size:25px;color:#000;transform:scaleX(0.9022);transform-origin:0 0;">Date:</div>
<div class="t" style="left:75.54px;top:1059.03px;font-size:25px;color:#000;transform:scaleX(0.8214);transform-origin:0 0;">Time:</div>
<div class="t" style="left:538.54px;top:1059.03px;font-size:25px;color:#000;transform:scaleX(0.8214);transform-origin:0 0;">Time:</div>
<div class="t" style="left:74.00px;top:1091.53px;font-size:25px;color:#000;transform:scaleX(0.8653);transform-origin:0 0;">Info text:</div>
<div class="t" style="left:537.00px;top:1091.53px;font-size:25px;color:#000;transform:scaleX(0.8653);transform-origin:0 0;">Info text:</div>
<div class="t" style="left:74.19px;top:1124.03px;font-size:25px;color:#000;transform:scaleX(0.8822);transform-origin:0 0;">No. patches:</div>
<div class="t" style="left:537.19px;top:1124.03px;font-size:25px;color:#000;transform:scaleX(0.8822);transform-origin:0 0;">No. patches:</div>
<div class="t" style="left:166.98px;top:994.03px;font-size:25px;color:#000;transform:scaleX(0.8773);transform-origin:0 0;">ISOcoated_v2_300_eci_WP_...</div>
<div class="t" style="left:167.93px;top:1026.53px;font-size:25px;color:#000;transform:scaleX(0.8516);transform-origin:0 0;">2023-10-10</div>
<div class="t" style="left:167.30px;top:1059.03px;font-size:25px;color:#000;transform:scaleX(0.8907);transform-origin:0 0;">15:57:46</div>
<div class="t" style="left:168.89px;top:1090.03px;font-size:25px;color:#000;">-</div>
<div class="t" style="left:212.50px;top:1123.53px;font-size:25px;color:#000;transform:scaleX(0.8800);transform-origin:0 0;">46</div>
<div class="t" style="left:632.05px;top:994.03px;font-size:25px;color:#000;transform:scaleX(0.8362);transform-origin:0 0;">Sample</div>
<div class="t" style="left:631.93px;top:1026.53px;font-size:25px;color:#000;transform:scaleX(0.8516);transform-origin:0 0;">2023-10-10</div>
<div class="t" style="left:631.30px;top:1059.03px;font-size:25px;color:#000;transform:scaleX(0.8906);transform-origin:0 0;">16:33:48</div>
<div class="t" style="left:676.50px;top:1123.53px;font-size:25px;color:#000;transform:scaleX(0.8800);transform-origin:0 0;">46</div>
<div class="r" style="left:1082px;top:130px;width:916px;height:712px;border:2px solid #a0a0a0;border-right:3px solid #a0a0a0;border-bottom:3px solid #a0a0a0;box-shadow:1px 2px 0 #d4d4d4, 1px 4px 0 #e0e0e0;"></div>
<svg width="2020" height="200" style="z-index:1"><path d="M1231 130 L1231 99 Q1231 93 1237 93 L1390 93 L1427 130" fill="url(#tg)" stroke="#a8a8a8" stroke-width="2"/><defs><linearGradient id="tg" x1="0" y1="0" x2="0" y2="1"><stop offset="0" stop-color="#ffffff"/><stop offset="1" stop-color="#f0f0f0"/></linearGradient></defs><path d="M1083 132 L1083 100 L1085 94 L1214 94 L1246 130 L1246 132 Z" fill="#f0f0f0"/><path d="M1083 132 L1083 100 L1085 94 L1214 94 L1246 130 L1998 130" fill="none" stroke="#a8a8a8" stroke-width="2"/><rect x="1084" y="94" width="131" height="6" fill="#0a74d6"/><path d="M1214 95 L1222 101" stroke="#0a74d6" stroke-width="3"/></svg>
<div class="t" style="left:1093.92px;top:101.03px;font-size:25px;color:#000;transform:scaleX(0.8472);transform-origin:0 0;">Color space</div>
<div class="t" style="left:1241.66px;top:101.03px;font-size:25px;color:#a0a0a0;transform:scaleX(0.8714);transform-origin:0 0;">Joblist/Preview</div>
<div class="r" style="left:1100px;top:159px;width:882px;height:662px;border:2px solid #b8b8b8;border-radius:4px;"></div>
<div class="r" style="left:1112px;top:150px;width:54px;height:22px;background:#f0f0f0;"></div>
<div class="t" style="left:1115.91px;top:150.03px;font-size:25px;color:#000080;transform:scaleX(0.8497);transform-origin:0 0;">View</div>
<div class="r" style="left:1118px;top:198px;width:155px;height:43px;background:linear-gradient(#ffffff 0%,#f4f4f4 20%,#f0f0f0 70%,#dcdcdc 100%);border:2px solid #696969;border-radius:2px;"></div>
<div class="r" style="left:1118px;top:248px;width:155px;height:47px;background:#f0f0f0;border:2px solid #c0c0c0;border-radius:2px;"></div>
<div class="r" style="left:1118px;top:302px;width:155px;height:44px;background:linear-gradient(#ffffff 0%,#f4f4f4 20%,#f0f0f0 70%,#dcdcdc 100%);border:2px solid #696969;border-radius:2px;"></div>
<div class="r" style="left:1118px;top:389px;width:155px;height:45px;background:linear-gradient(#ffffff 0%,#f4f4f4 20%,#f0f0f0 70%,#dcdcdc 100%);border:2px solid #696969;border-radius:2px;"></div>
<svg width="2020" height="800" style="z-index:2"><path d="M1196 210 L1212 210 L1212 227 L1206 234 L1206 217 Z" fill="#909090" stroke="#000" stroke-width="2"/><path d="M1188 217 L1196 210 L1212 210 L1206 217 Z" fill="#f0f0f0" stroke="#000" stroke-width="2"/><rect x="1189" y="217" width="17" height="17" fill="#f0f0f0" stroke="#000" stroke-width="2"/><rect x="1191" y="263" width="18" height="16" fill="#e8e8e8" stroke="#222" stroke-width="2.5"/><rect x="1193" y="317" width="18" height="21" fill="none" stroke="#000" stroke-width="2"/><rect x="1189" y="331" width="8" height="8" fill="#f0f0f0" stroke="#909090" stroke-width="2"/><circle cx="1199" cy="412" r="12" fill="none" stroke="#000" stroke-width="2"/><path d="M1190 407 L1208 407 L1199 417 Z" fill="none" stroke="#000" stroke-width="2"/></svg>
<div class="r" style="left:1116px;top:507px;width:194px;height:203px;border:2px solid #b8b8b8;border-radius:4px;"></div>
<div class="r" style="left:1128px;top:498px;width:54px;height:22px;background:#f0f0f0;"></div>
<div class="t" style="left:1132.04px;top:498.03px;font-size:25px;color:#000080;transform:scaleX(0.8460);transform-origin:0 0;">Show</div>
<div class="r" style="left:1132px;top:544.0px;width:26px;height:26.0px;background:#ffffff;border:2px solid #a0a0a0;"></div>
<svg width="2020" height="800" style="z-index:2"><path d="M1139 555.0 L1143 561.0 L1151 551.0" fill="none" stroke="#1a72d8" stroke-width="3.5"/></svg>
<div class="t" style="left:1167.70px;top:543.53px;font-size:25px;color:#000;transform:scaleX(0.8780);transform-origin:0 0;">Reference</div>
<div class="r" style="left:1132px;top:591.7px;width:26px;height:26.0px;background:#ffffff;border:2px solid #a0a0a0;"></div>
<svg width="2020" height="800" style="z-index:2"><path d="M1139 602.7 L1143 608.7 L1151 598.7" fill="none" stroke="#1a72d8" stroke-width="3.5"/></svg>
<div class="t" style="left:1168.57px;top:591.23px;font-size:25px;color:#000;transform:scaleX(0.8179);transform-origin:0 0;">Sample_</div>
<div class="r" style="left:1132px;top:639.4px;width:26px;height:26.0px;background:#ffffff;border:2px solid #a0a0a0;"></div>
<svg width="2020" height="800" style="z-index:2"><path d="M1139 650.4 L1143 656.4 L1151 646.4" fill="none" stroke="#1a72d8" stroke-width="3.5"/></svg>
<div class="t" style="left:1169.41px;top:638.93px;font-size:25px;color:#000;transform:scaleX(0.8572);transform-origin:0 0;">Whole gamut</div>
<div class="r" style="left:1336px;top:198px;width:18px;height:584px;background:#ffffff;border-left:3px solid #8a8a8a;border-top:2px solid #8a8a8a;border-right:2px solid #e0e0e0;border-bottom:2px solid #e0e0e0;"></div>
<svg width="2020" height="800" style="z-index:3"><rect x="1336" y="485" width="21" height="5" fill="#ffffff"/><rect x="1338" y="490" width="19" height="3" fill="#9a9a9a"/><rect x="1336" y="493" width="21" height="3" fill="#5a5a5a"/><path d="M1356 490 L1360 487 L1360 491 L1356 495 Z" fill="#606060"/></svg>
<div class="t" style="left:1259.20px;top:761.03px;font-size:25px;color:#000;transform:scaleX(0.8783);transform-origin:0 0;">L=  50</div>
<div class="r" style="left:1372.5px;top:197px;width:584px;height:584px;border-radius:50%;background:radial-gradient(circle closest-side, rgba(255,252,246,1) 0%, rgba(252,248,240,0.88) 15%, rgba(248,244,236,0.52) 38%, rgba(248,244,236,0.16) 60%, rgba(248,244,236,0) 79%),conic-gradient(from 90deg, #ff0030 0deg, #ff0080 11deg, #ff00ff 28deg, #8000ff 46deg, #2000ff 68deg, #0000ff 84deg, #0040ff 102deg, #0080ff 118deg, #00ffff 145deg, #00ff90 163deg, #00ff40 180deg, #00ff00 196deg, #40ff00 211deg, #b0ff00 228deg, #ffff00 244deg, #ffd800 264deg, #ffb000 285deg, #ff8000 308deg, #ff3000 328deg, #ff0000 342deg, #ff0030 360deg);box-shadow:0 0 0 2px rgba(20,20,20,0.8);"></div>
<svg width="2020" height="900" style="z-index:4"><circle cx="1664.5" cy="490" r="145" fill="none" stroke="rgba(255,255,255,0.75)" stroke-width="3"/><line x1="1664.5" y1="197" x2="1664.5" y2="781" stroke="rgba(255,255,255,0.85)" stroke-width="3"/><line x1="1372.5" y1="489" x2="1956.5" y2="489" stroke="rgba(255,255,255,0.85)" stroke-width="3"/><polygon points="1649,254 1830,369 1846,494 1799,540 1717,604 1569,611 1531,536 1497,419" fill="rgba(20,10,0,0.2)" stroke="none"/><polygon points="1649,254 1830,369 1846,494 1799,540 1717,604 1569,611 1531,536 1497,419" fill="none" stroke="#0000e0" stroke-width="1.5" transform="translate(1,1)"/><polygon points="1649,254 1830,369 1846,494 1799,540 1717,604 1569,611 1531,536 1497,419" fill="none" stroke="#e00000" stroke-width="1.5"/><rect x="1600" y="317" width="6" height="6" fill="#0000c0"/><rect x="1602" y="315" width="6" height="6" fill="#c00000"/><rect x="1645" y="324" width="6" height="6" fill="#0000c0"/><rect x="1647" y="322" width="6" height="6" fill="#c00000"/><rect x="1714" y="303" width="6" height="6" fill="#0000c0"/><rect x="1716" y="301" width="6" height="6" fill="#c00000"/><rect x="1660" y="374" width="6" height="6" fill="#0000c0"/><rect x="1662" y="372" width="6" height="6" fill="#c00000"/><rect x="1648" y="405" width="6" height="6" fill="#0000c0"/><rect x="1650" y="403" width="6" height="6" fill="#c00000"/><rect x="1557" y="433" width="6" height="6" fill="#0000c0"/><rect x="1559" y="431" width="6" height="6" fill="#c00000"/><rect x="1567" y="451" width="6" height="6" fill="#0000c0"/><rect x="1569" y="449" width="6" height="6" fill="#c00000"/><rect x="1609" y="457" width="6" height="6" fill="#0000c0"/><rect x="1611" y="455" width="6" height="6" fill="#c00000"/><rect x="1705" y="441" width="6" height="6" fill="#0000c0"/><rect x="1707" y="439" width="6" height="6" fill="#c00000"/><rect x="1715" y="431" width="6" height="6" fill="#0000c0"/><rect x="1717" y="429" width="6" height="6" fill="#c00000"/><rect x="1714" y="444" width="6" height="6" fill="#0000c0"/><rect x="1716" y="442" width="6" height="6" fill="#c00000"/><rect x="1751" y="411" width="6" height="6" fill="#0000c0"/><rect x="1753" y="409" width="6" height="6" fill="#c00000"/><rect x="1756" y="426" width="6" height="6" fill="#0000c0"/><rect x="1758" y="424" width="6" height="6" fill="#c00000"/><rect x="1773" y="390" width="6" height="6" fill="#0000c0"/><rect x="1775" y="388" width="6" height="6" fill="#c00000"/><rect x="1834" y="446" width="6" height="6" fill="#0000c0"/><rect x="1836" y="444" width="6" height="6" fill="#c00000"/><rect x="1647" y="492" width="6" height="6" fill="#0000c0"/><rect x="1649" y="490" width="6" height="6" fill="#c00000"/><rect x="1654" y="490" width="6" height="6" fill="#0000c0"/><rect x="1656" y="488" width="6" height="6" fill="#c00000"/><rect x="1642" y="495" width="6" height="6" fill="#0000c0"/><rect x="1644" y="493" width="6" height="6" fill="#c00000"/><rect x="1769" y="490" width="6" height="6" fill="#0000c0"/><rect x="1771" y="488" width="6" height="6" fill="#c00000"/><rect x="1783" y="500" width="6" height="6" fill="#0000c0"/><rect x="1785" y="498" width="6" height="6" fill="#c00000"/><rect x="1720" y="500" width="6" height="6" fill="#0000c0"/><rect x="1722" y="498" width="6" height="6" fill="#c00000"/><rect x="1592" y="538" width="6" height="6" fill="#0000c0"/><rect x="1594" y="536" width="6" height="6" fill="#c00000"/><rect x="1626" y="539" width="6" height="6" fill="#0000c0"/><rect x="1628" y="537" width="6" height="6" fill="#c00000"/><rect x="1685" y="543" width="6" height="6" fill="#0000c0"/><rect x="1687" y="541" width="6" height="6" fill="#c00000"/><rect x="1682" y="545" width="6" height="6" fill="#0000c0"/><rect x="1684" y="543" width="6" height="6" fill="#c00000"/><rect x="1595" y="576" width="6" height="6" fill="#0000c0"/><rect x="1597" y="574" width="6" height="6" fill="#c00000"/><rect x="1701" y="576" width="6" height="6" fill="#0000c0"/><rect x="1703" y="574" width="6" height="6" fill="#c00000"/><rect x="1636" y="605" width="6" height="6" fill="#0000c0"/><rect x="1638" y="603" width="6" height="6" fill="#c00000"/><rect x="1712" y="601" width="6" height="6" fill="#0000c0"/><rect x="1714" y="599" width="6" height="6" fill="#c00000"/><rect x="1796" y="538" width="6" height="6" fill="#0000c0"/><rect x="1798" y="536" width="6" height="6" fill="#c00000"/><rect x="1526" y="535" width="6" height="6" fill="#0000c0"/><rect x="1528" y="533" width="6" height="6" fill="#c00000"/><rect x="1566" y="609" width="6" height="6" fill="#0000c0"/><rect x="1568" y="607" width="6" height="6" fill="#c00000"/><rect x="1645" y="252" width="6" height="6" fill="#0000c0"/><rect x="1647" y="250" width="6" height="6" fill="#c00000"/><rect x="1826" y="367" width="6" height="6" fill="#0000c0"/><rect x="1828" y="365" width="6" height="6" fill="#c00000"/><rect x="1842" y="492" width="6" height="6" fill="#0000c0"/><rect x="1844" y="490" width="6" height="6" fill="#c00000"/><rect x="1493" y="417" width="6" height="6" fill="#0000c0"/><rect x="1495" y="415" width="6" height="6" fill="#c00000"/><rect x="1649" y="489" width="6" height="6" fill="#0000c0"/><rect x="1651" y="487" width="6" height="6" fill="#c00000"/></svg>
<div class="t" style="left:1081.95px;top:860.03px;font-size:25px;color:#000;transform:scaleX(0.8309);transform-origin:0 0;">Comparison Settings</div>
<div class="r" style="left:1082px;top:896px;width:920px;height:42px;background:#ffffff;border:2px solid #a0a0a0;"></div>
<div class="r" style="left:1964px;top:900px;width:34px;height:34px;background:#f0f0f0;border-top:2px solid #fff;border-left:2px solid #fff;border-right:3px solid #888;border-bottom:3px solid #888;"></div>
<svg width="2020" height="1000" style="z-index:2"><path d="M1974 914 L1989 914 L1981 922 Z" fill="#000"/></svg>
<div class="t" style="left:1087.93px;top:904.03px;font-size:25px;color:#000;transform:scaleX(0.8412);transform-origin:0 0;">Custom</div>
<div class="r" style="left:1082px;top:998px;width:916px;height:323px;border:2px solid #a0a0a0;border-right:3px solid #a0a0a0;border-bottom:3px solid #a0a0a0;box-shadow:1px 2px 0 #d4d4d4, 1px 4px 0 #e0e0e0;"></div>
<svg width="2020" height="1100" style="z-index:1"><defs><linearGradient id="tg2" x1="0" y1="0" x2="0" y2="1"><stop offset="0" stop-color="#ffffff"/><stop offset="1" stop-color="#eeeeee"/></linearGradient></defs><path d="M1626 998 L1626 967 Q1626 961 1632 961 L1708 961 L1744 998 Z" fill="url(#tg2)" stroke="#a8a8a8" stroke-width="2"/><path d="M1508 998 L1508 967 Q1508 961 1514 961 L1606 961 L1640 998 Z" fill="url(#tg2)" stroke="#a8a8a8" stroke-width="2"/><path d="M1403 998 L1403 967 Q1403 961 1409 961 L1487 961 L1522 998 Z" fill="url(#tg2)" stroke="#a8a8a8" stroke-width="2"/><path d="M1295 998 L1295 967 Q1295 961 1301 961 L1380 961 L1416 998 Z" fill="url(#tg2)" stroke="#a8a8a8" stroke-width="2"/><path d="M1188 998 L1188 967 Q1188 961 1194 961 L1274 961 L1310 998 Z" fill="url(#tg2)" stroke="#a8a8a8" stroke-width="2"/><path d="M1083 1000 L1083 967 L1087 961 L1168 961 L1204 998 L1204 1000 Z" fill="#f0f0f0"/><path d="M1083 1000 L1083 967 L1087 961 L1168 961 L1204 998 L1998 998" fill="none" stroke="#a8a8a8" stroke-width="2"/><rect x="1084" y="962" width="86" height="6" fill="#0a74d6"/></svg>
<div class="t" style="left:1094.27px;top:969.53px;font-size:25px;color:#000;transform:scaleX(0.8457);transform-origin:0 0;">Results</div>
<div class="t" style="left:1200.28px;top:969.53px;font-size:25px;color:#000;transform:scaleX(0.8370);transform-origin:0 0;">Delta E</div>
<div class="t" style="left:1306.24px;top:969.53px;font-size:25px;color:#000;transform:scaleX(0.8578);transform-origin:0 0;">Delta H</div>
<div class="t" style="left:1413.32px;top:969.53px;font-size:25px;color:#000;transform:scaleX(0.8210);transform-origin:0 0;">Delta T</div>
<div class="t" style="left:1518.20px;top:969.53px;font-size:25px;color:#000;transform:scaleX(0.8761);transform-origin:0 0;">Delta Ch</div>
<div class="t" style="left:1636.28px;top:969.53px;font-size:25px;color:#000;transform:scaleX(0.8385);transform-origin:0 0;">Delta L</div>
<div class="r" style="left:1116px;top:1056px;width:624px;height:2px;background:#ebebeb;"></div>
<div class="r" style="left:1116px;top:1088px;width:624px;height:2px;background:#ebebeb;"></div>
<div class="r" style="left:1116px;top:1120px;width:624px;height:2px;background:#ebebeb;"></div>
<div class="r" style="left:1116px;top:1184px;width:624px;height:2px;background:#ebebeb;"></div>
<div class="r" style="left:1116px;top:1216px;width:624px;height:2px;background:#ebebeb;"></div>
<div class="r" style="left:1116px;top:1024px;width:624px;height:32px;background:#c8c8c8;"></div>
<div class="t" style="left:1115.35px;top:1027.03px;font-size:25px;color:#000;font-weight:bold;transform:scaleX(0.9865);transform-origin:0 0;">Delta E</div>
<div class="t" style="left:1484.51px;top:1029.03px;font-size:25px;color:#000;transform:scaleX(0.8676);transform-origin:0 0;">Tolerance</div>
<div class="t" style="left:1595.21px;top:1029.03px;font-size:25px;color:#000;transform:scaleX(0.8744);transform-origin:0 0;">Measured</div>
<div class="r" style="left:1116px;top:1058px;width:624px;height:30px;background:#ffffff;"></div>
<div class="t" style="left:1116.96px;top:1061.03px;font-size:25px;color:#000;transform:scaleX(0.8599);transform-origin:0 0;">Average all patches</div>
<div class="t" style="left:1484.25px;top:1061.03px;font-size:25px;color:#000;transform:scaleX(0.7921);transform-origin:0 0;">3.0</div>
<div class="t" style="left:1596.22px;top:1061.03px;font-size:25px;color:#000;transform:scaleX(0.7953);transform-origin:0 0;">0.8</div>
<svg width="2020" height="1300" style="z-index:2"><path d="M1716 1070 L1722 1079 L1731 1064" fill="none" stroke="#008000" stroke-width="3.5"/></svg>
<div class="r" style="left:1116px;top:1090px;width:624px;height:30px;background:#ffffff;"></div>
<div class="t" style="left:1115.27px;top:1093.03px;font-size:25px;color:#000;transform:scaleX(0.8454);transform-origin:0 0;">Maximum all patches</div>
<div class="t" style="left:1483.98px;top:1093.03px;font-size:25px;color:#000;transform:scaleX(0.7998);transform-origin:0 0;">6.0</div>
<div class="t" style="left:1595.99px;top:1093.03px;font-size:25px;color:#000;transform:scaleX(0.8013);transform-origin:0 0;">2.5</div>
<svg width="2020" height="1300" style="z-index:2"><path d="M1716 1102 L1722 1111 L1731 1096" fill="none" stroke="#008000" stroke-width="3.5"/></svg>
<div class="r" style="left:1116px;top:1122px;width:624px;height:32px;background:#c8c8c8;"></div>
<div class="t" style="left:1115.33px;top:1125.03px;font-size:25px;color:#000;font-weight:bold;letter-spacing:0.204px;">Delta H</div>
<div class="r" style="left:1116px;top:1154px;width:624px;height:30px;background:#ffffff;"></div>
<div class="t" style="left:1115.26px;top:1157.03px;font-size:25px;color:#000;transform:scaleX(0.8461);transform-origin:0 0;">Maximum CMY patches</div>
<div class="t" style="left:1483.99px;top:1157.03px;font-size:25px;color:#000;transform:scaleX(0.8013);transform-origin:0 0;">2.5</div>
<div class="t" style="left:1596.22px;top:1157.03px;font-size:25px;color:#000;transform:scaleX(0.7995);transform-origin:0 0;">0.7</div>
<svg width="2020" height="1300" style="z-index:2"><path d="M1716 1166 L1722 1175 L1731 1160" fill="none" stroke="#008000" stroke-width="3.5"/></svg>
<div class="r" style="left:1116px;top:1186px;width:624px;height:30px;background:#ffffff;"></div>
<div class="t" style="left:1115.27px;top:1189.03px;font-size:25px;color:#000;transform:scaleX(0.8457);transform-origin:0 0;">Maximum CMYK patches</div>
<div class="t" style="left:1483.99px;top:1189.03px;font-size:25px;color:#000;transform:scaleX(0.8013);transform-origin:0 0;">2.5</div>
<div class="t" style="left:1596.22px;top:1189.03px;font-size:25px;color:#000;transform:scaleX(0.7995);transform-origin:0 0;">0.7</div>
<svg width="2020" height="1300" style="z-index:2"><path d="M1716 1198 L1722 1207 L1731 1192" fill="none" stroke="#008000" stroke-width="3.5"/></svg>
<div class="r" style="left:1116px;top:1218px;width:624px;height:32px;background:#c8c8c8;"></div>
<div class="t" style="left:1115.34px;top:1221.03px;font-size:25px;color:#000;font-weight:bold;transform:scaleX(0.9912);transform-origin:0 0;">Delta T (tone value difference)</div>
<div class="r" style="left:1116px;top:1250px;width:624px;height:30px;background:#ffffff;"></div>
<div class="t" style="left:1115.27px;top:1253.03px;font-size:25px;color:#000;transform:scaleX(0.8457);transform-origin:0 0;">Maximum CMYK patches</div>
<div class="t" style="left:1483.42px;top:1253.03px;font-size:25px;color:#000;transform:scaleX(0.8301);transform-origin:0 0;">10.0</div>
<div class="t" style="left:1595.46px;top:1253.03px;font-size:25px;color:#000;transform:scaleX(0.8095);transform-origin:0 0;">1.4</div>
<svg width="2020" height="1300" style="z-index:2"><path d="M1716 1262 L1722 1271 L1731 1256" fill="none" stroke="#008000" stroke-width="3.5"/></svg>
<div class="t" style="left:1809.40px;top:1128.03px;font-size:25px;color:#008000;font-weight:bold;transform:scaleX(0.9592);transform-origin:0 0;">PASSED</div>
<div class="r" style="left:1083px;top:1352px;width:918px;height:89px;border:2px solid #b8b8b8;border-radius:4px;"></div>
<div class="r" style="left:1094px;top:1342px;width:182px;height:22px;background:#f0f0f0;"></div>
<div class="t" style="left:1097.22px;top:1342.03px;font-size:25px;color:#000080;transform:scaleX(0.8663);transform-origin:0 0;">Measuring device:</div>
<div class="r" style="left:1111px;top:1384px;width:89px;height:34px;background:#008000;border:2px solid #707070;"></div>
<div class="t" style="left:1221.88px;top:1387.03px;font-size:25px;color:#000;transform:scaleX(0.8810);transform-origin:0 0;">Connected</div>
<div class="r" style="left:1756px;top:1378px;width:190px;height:38px;background:linear-gradient(#ffffff 0%,#f4f4f4 20%,#f0f0f0 70%,#dcdcdc 100%);border:2px solid #696969;border-radius:2px;"></div>
<div class="t" style="left:1792.63px;top:1384.03px;font-size:25px;color:#000;letter-spacing:1.060px;transform:scaleX(1.0804);transform-origin:0 0;">Calibrate</div>
<div class="r" style="left:2px;top:1462px;width:2016px;height:30px;background:#f0f0f0;"></div>
<div class="r" style="left:3px;top:1462px;width:417px;height:30px;border-top:2px solid #a0a0a0;border-left:2px solid #a0a0a0;border-right:1px solid #fff;"></div>
<div class="r" style="left:426px;top:1462px;width:324px;height:30px;border-top:2px solid #a0a0a0;border-left:2px solid #a0a0a0;border-right:1px solid #fff;"></div>
<div class="r" style="left:755px;top:1462px;width:375px;height:30px;border-top:2px solid #a0a0a0;border-left:2px solid #a0a0a0;border-right:1px solid #fff;"></div>
<div class="r" style="left:1136px;top:1462px;width:394px;height:30px;border-top:2px solid #a0a0a0;border-left:2px solid #a0a0a0;border-right:1px solid #fff;"></div>
<div class="r" style="left:1536px;top:1462px;width:184px;height:30px;border-top:2px solid #a0a0a0;border-left:2px solid #a0a0a0;border-right:1px solid #fff;"></div>
<div class="r" style="left:1726px;top:1462px;width:289px;height:30px;border-top:2px solid #a0a0a0;border-left:2px solid #a0a0a0;border-right:1px solid #fff;"></div>
<div class="r" style="left:2px;top:1490px;width:2016px;height:2px;background:#ffffff;"></div>
<div class="t" style="left:4.95px;top:1466.53px;font-size:25px;color:#000;letter-spacing:0.044px;">Login:</div>
<div class="t" style="left:429.96px;top:1466.53px;font-size:25px;color:#000;transform:scaleX(0.9926);transform-origin:0 0;">Measuring method: multi</div>
<div class="t" style="left:759.15px;top:1466.53px;font-size:25px;color:#000;transform:scaleX(0.9002);transform-origin:0 0;">Measuring device: EFI ES-2000</div>
<div class="t" style="left:1139.22px;top:1466.53px;font-size:25px;color:#000;transform:scaleX(0.9250);transform-origin:0 0;">Ugra Fogra-MediaWedge V2.2a</div>
<div class="t" style="left:1538.73px;top:1466.53px;font-size:25px;color:#000;transform:scaleX(0.9849);transform-origin:0 0;">Illuminant: D50</div>
<div class="t" style="left:1729.15px;top:1466.53px;font-size:25px;color:#000;transform:scaleX(0.9008);transform-origin:0 0;">Delta E format: dE CIE76</div>
</body></html>
